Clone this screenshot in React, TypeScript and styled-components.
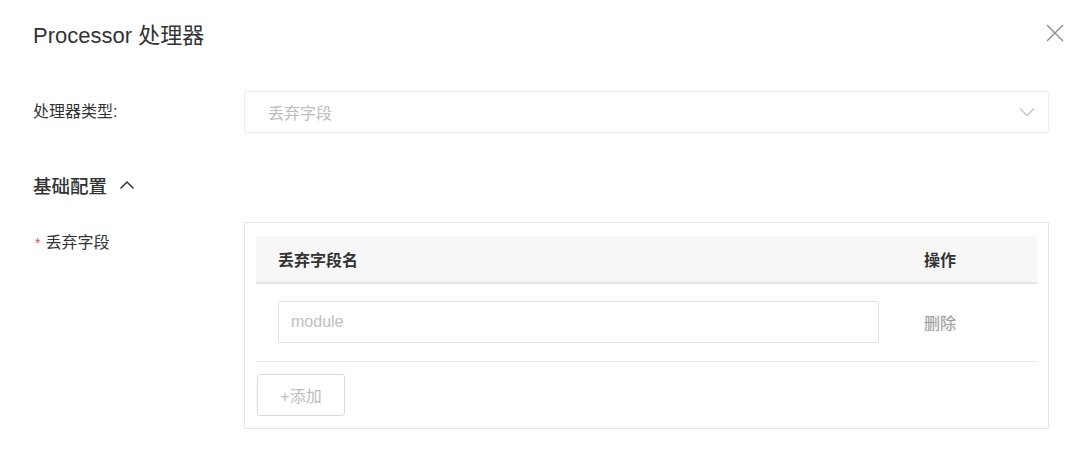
import React from "react";
import styled, { createGlobalStyle } from "styled-components";

const GlobalStyle = createGlobalStyle`
  body {
    margin: 0;
    background: #fff;
    font-family: "Liberation Sans", "Noto Sans CJK SC", sans-serif;
    color: #333;
  }
`;

export default () => (
  <Dialog>
    <GlobalStyle />
    <Header>
      <Title>Processor 处理器</Title>
      <CloseButton aria-label="close">
        <svg width="18" height="18" viewBox="0 0 18 18">
          <path d="M1 1 L17 17 M17 1 L1 17" stroke="#8c8c8c" strokeWidth="1.4" fill="none" />
        </svg>
      </CloseButton>
    </Header>

    <Body>
      <FormRow>
        <Label>处理器类型:</Label>
        <Select>
          <Placeholder>丢弃字段</Placeholder>
          <svg width="16" height="10" viewBox="0 0 16 10">
            <path d="M1 1.5 L8 8.5 L15 1.5" stroke="#c4c4c4" strokeWidth="1.3" fill="none" />
          </svg>
        </Select>
      </FormRow>

      <SectionTitle>
        基础配置
        <svg width="16" height="10" viewBox="0 0 16 10">
          <path d="M1.5 8.5 L8 2 L14.5 8.5" stroke="#333" strokeWidth="1.5" fill="none" />
        </svg>
      </SectionTitle>

      <FormRow>
        <Label>
          <Required>*</Required>丢弃字段
        </Label>
        <FieldBox>
          <Table>
            <HeadRow>
              <NameCell>丢弃字段名</NameCell>
              <ActionCell>操作</ActionCell>
            </HeadRow>
            <DataRow>
              <NameCell>
                <Input placeholder="module" />
              </NameCell>
              <ActionCell>
                <DeleteLink>删除</DeleteLink>
              </ActionCell>
            </DataRow>
          </Table>
          <AddButton>+添加</AddButton>
        </FieldBox>
      </FormRow>
    </Body>
  </Dialog>
);

const Dialog = styled.div`
  width: 1080px;
  height: 457px;
  background: #fff;
  overflow: hidden;
`;

const Header = styled.div`
  height: 66px;
  padding: 0 16px 0 33px;
  display: flex;
  align-items: center;
  justify-content: space-between;
`;

const Title = styled.div`
  font-size: 22px;
  color: #333;
`;

const CloseButton = styled.div`
  width: 18px;
  height: 18px;
  display: flex;
`;

const Body = styled.div`
  padding: 25px 31px 0 33px;
`;

const FormRow = styled.div`
  display: flex;
  align-items: flex-start;
`;

const Label = styled.div`
  width: 211px;
  flex-shrink: 0;
  line-height: 42px;
  font-size: 16px;
  color: #333;
`;

const Required = styled.span`
  color: #d9534f;
  margin: 0 5px 0 2px;
  font-size: 14px;
`;

const Select = styled.div`
  flex: 1;
  height: 42px;
  box-sizing: border-box;
  border: 1px solid #ececec;
  border-radius: 3px;
  padding: 0 13px 0 23px;
  display: flex;
  align-items: center;
  justify-content: space-between;
`;

const Placeholder = styled.span`
  font-size: 16px;
  color: #bdbdbd;
`;

const SectionTitle = styled.div`
  margin: 40px 0 25px;
  height: 24px;
  display: flex;
  align-items: center;
  gap: 12px;
  font-size: 18.5px;
  font-weight: 500;
  color: #333;
`;

const FieldBox = styled.div`
  flex: 1;
  border: 1px solid #e6e6e6;
  padding: 13px 11px 12px 11px;
`;

const Table = styled.div`
  display: flex;
  flex-direction: column;
`;

const HeadRow = styled.div`
  display: flex;
  align-items: center;
  height: 46px;
  background: #f7f7f7;
  border-bottom: 2px solid #e3e3e3;
  font-size: 16px;
  font-weight: 600;
  color: #333;
`;

const DataRow = styled.div`
  display: flex;
  align-items: center;
  padding: 17px 0 18px;
  border-bottom: 1px solid #e6e6e6;
`;

const NameCell = styled.div`
  flex: 1;
  padding: 0 22px 0 22px;
`;

const ActionCell = styled.div`
  width: 136px;
  flex-shrink: 0;
  padding-left: 23px;
  box-sizing: border-box;
`;

const Input = styled.input`
  width: 601px;
  height: 42px;
  box-sizing: border-box;
  border: 1px solid #e3e3e3;
  border-radius: 2px;
  padding: 0 12px;
  font-family: "Liberation Sans", "Noto Sans CJK SC", sans-serif;
  font-size: 16px;
  outline: none;
  &::placeholder {
    color: #c0c0c0;
  }
`;

const DeleteLink = styled.span`
  font-size: 16px;
  color: #9a9a9a;
  background: #f6f6f6;
`;

const AddButton = styled.div`
  margin: 12px 0 0 1px;
  width: 88px;
  height: 42px;
  box-sizing: border-box;
  border: 1px solid #dadada;
  border-radius: 3px;
  display: flex;
  align-items: center;
  justify-content: center;
  font-size: 16px;
  color: #bdbdbd;
`;
